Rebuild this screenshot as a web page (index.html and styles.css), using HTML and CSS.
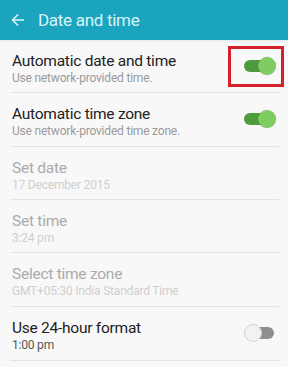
FILE: index.html
```html
<!DOCTYPE html>
<html>
<head>
<meta charset="utf-8">
<link rel="stylesheet" href="styles.css">
</head>
<body>
<div class="app">
  <header class="bar">
    <svg class="back" width="14" height="14" viewBox="0 0 14 14"><path d="M13 7H2M7 1.5L1.5 7 7 12.5" fill="none" stroke="#d8f4f8" stroke-width="1.6"/></svg>
    <span class="bar-title">Date and time</span>
  </header>
  <ul class="list">
    <li class="row">
      <div class="text"><div class="title">Automatic date and time</div><div class="sub">Use network-provided time.</div></div>
      <div class="switch-wrap"><span class="switch on"><span class="thumb"></span></span><span class="mark"></span></div>
    </li>
    <li class="row">
      <div class="text"><div class="title">Automatic time zone</div><div class="sub">Use network-provided time zone.</div></div>
      <div class="switch-wrap"><span class="switch on"><span class="thumb"></span></span></div>
    </li>
    <li class="row disabled">
      <div class="text"><div class="title">Set date</div><div class="sub">17 December 2015</div></div>
    </li>
    <li class="row disabled">
      <div class="text"><div class="title">Set time</div><div class="sub">3:24 pm</div></div>
    </li>
    <li class="row disabled">
      <div class="text"><div class="title">Select time zone</div><div class="sub">GMT+05:30 India Standard Time</div></div>
    </li>
    <li class="row">
      <div class="text"><div class="title">Use 24-hour format</div><div class="sub dark">1:00 pm</div></div>
      <div class="switch-wrap"><span class="switch off"><span class="thumb"></span></span></div>
    </li>
  </ul>
</div>
</body>
</html>
```
FILE: styles.css
```css
html, body { margin: 0; padding: 0; }
body { background: #f8f8f8; font-family: Roboto, "Noto Sans", sans-serif; width: 288px; height: 367px; overflow: hidden; }
.bar { height: 40px; background: #1aa4bd; display: flex; align-items: center; padding-left: 11px; box-sizing: border-box; box-shadow: 0 1px 2px rgba(0,0,0,0.08); }
.back { display: block; margin-right: 13px; }
.bar-title { color: #d9f5f9; font-size: 17px; line-height: 20px; letter-spacing: -0.3px; padding-bottom: 1px; }
.list { list-style: none; margin: 0; padding: 0; }
.row { height: 52px; box-sizing: content-box; margin: 0 9px 0 10px; padding: 0 0 0 2px; border-bottom: 1px solid #e3e3e3; display: flex; align-items: flex-start; }
.row:nth-child(2), .row:nth-child(5), .row:nth-child(6) { height: 53px; }
.text { flex: 1; padding-top: 11px; }
.title { font-size: 15.5px; line-height: 20px; letter-spacing: -0.25px; color: #222; }
.sub { font-size: 12px; line-height: 15px; letter-spacing: -0.2px; color: #9a9a9a; }
.sub.dark { color: #555; }
.disabled .title { color: #ababab; }
.disabled .sub { color: #cfcfcf; }
.switch-wrap { position: relative; width: 46px; height: 52px; display: flex; align-items: center; }
.switch { position: relative; display: block; width: 30px; height: 12px; border-radius: 6px; margin-left: 11px; }
.switch.on { background: #4c9b3c; }
.switch.on .thumb { position: absolute; right: -2px; top: -3px; width: 18px; height: 18px; border-radius: 50%; background: #7fcd62; box-shadow: 0 0 1px rgba(0,0,0,0.3); }
.switch.off { background: #8f8f8f; width: 28px; margin-left: 13px; }
.switch.off .thumb { position: absolute; left: -2px; top: -3px; width: 16px; height: 16px; border-radius: 50%; background: #f2f2f2; border: 1px solid #d4d4d4; }
.mark { position: absolute; left: -5px; top: 6px; width: 50px; height: 35px; border: 3px solid #d4202b; }
```
